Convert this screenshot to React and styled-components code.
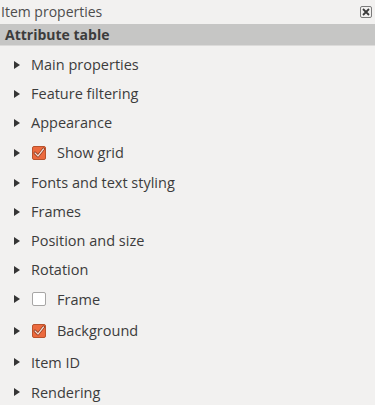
import React from "react";
import styled, { createGlobalStyle } from "styled-components";

const Global = createGlobalStyle`
  html, body { margin: 0; padding: 0; background: #f2f1f0; }
  body { font-family: "Open Sans", "Noto Sans", sans-serif; }
  * { box-sizing: border-box; }
`;

const Panel = styled.div`
  width: 375px;
  height: 405px;
  overflow: hidden;
  background: #f2f1f0;
  display: flex;
  flex-direction: column;
`;

const TitleBar = styled.div`
  height: 24px;
  flex-shrink: 0;
  display: flex;
  align-items: center;
  justify-content: space-between;
  padding: 0 2px 0 1px;
`;

const Title = styled.span`
  font-size: 14px;
  color: #4d4d4d;
  line-height: 1;
  margin-top: -1px;
`;

const CloseBox = styled.div`
  width: 12px;
  height: 12px;
  border: 1px solid #7a7a7a;
  border-radius: 2px;
  display: flex;
  align-items: center;
  justify-content: center;
  margin-right: 1px;
  margin-top: -1px;
`;

const SectionBar = styled.div`
  height: 22px;
  flex-shrink: 0;
  background: #c6c6c5;
  border-bottom: 1px solid #dcdbda;
  display: flex;
  align-items: center;
  padding-left: 5px;
`;

const SectionTitle = styled.span`
  font-size: 14px;
  font-weight: 700;
  color: #3c3c3c;
`;

const List = styled.div`
  display: flex;
  flex-direction: column;
  padding-top: 4px;
`;

const Row = styled.div`
  height: ${(p) => p.$h}px;
  flex-shrink: 0;
  display: flex;
  align-items: center;
  padding-left: 14px;
`;

const Arrow = styled.span`
  width: 0;
  height: 0;
  border-top: 4.5px solid transparent;
  border-bottom: 4.5px solid transparent;
  border-left: 6px solid #353535;
  margin-right: 11px;
`;

const Label = styled.span`
  font-size: 14.5px;
  color: #3c3c3c;
  white-space: nowrap;
`;

const Box = styled.span`
  width: 14px;
  height: 14px;
  margin-left: 1px;
  margin-right: 11px;
  border-radius: 2px;
  border: 1px solid ${(p) => (p.$on ? "#b9522c" : "#a7a6a5")};
  background: ${(p) => (p.$on ? "#ec6a3e" : "#ffffff")};
  display: flex;
  align-items: center;
  justify-content: center;
`;

const Check = () => (
  <svg width="12" height="12" viewBox="0 0 12 12">
    <path d="M2 6 L5 9 L10.5 2" fill="none" stroke="#7a2a12" strokeWidth="2.6" strokeLinecap="round" strokeLinejoin="round" />
    <path d="M2 6 L5 9 L10.5 2" fill="none" stroke="#f6d9cc" strokeWidth="1.3" strokeLinecap="round" strokeLinejoin="round" />
  </svg>
);

const rows = [
  { label: "Main properties", h: 29 },
  { label: "Feature filtering", h: 29 },
  { label: "Appearance", h: 29 },
  { label: "Show grid", h: 31, check: true },
  { label: "Fonts and text styling", h: 29 },
  { label: "Frames", h: 29 },
  { label: "Position and size", h: 29 },
  { label: "Rotation", h: 29 },
  { label: "Frame", h: 30, check: false },
  { label: "Background", h: 33, check: true },
  { label: "Item ID", h: 30 },
  { label: "Rendering", h: 30 },
];

export default function App() {
  return (
    <Panel>
      <Global />
      <TitleBar>
        <Title>Item properties</Title>
        <CloseBox>
          <svg width="8" height="8" viewBox="0 0 8 8">
            <path d="M1 1 L7 7 M7 1 L1 7" stroke="#3a3a3a" strokeWidth="1.8" />
          </svg>
        </CloseBox>
      </TitleBar>
      <SectionBar>
        <SectionTitle>Attribute table</SectionTitle>
      </SectionBar>
      <List>
        {rows.map((r) => (
          <Row key={r.label} $h={r.h}>
            <Arrow />
            {r.check !== undefined && (
              <Box $on={r.check}>{r.check && <Check />}</Box>
            )}
            <Label>{r.label}</Label>
          </Row>
        ))}
      </List>
    </Panel>
  );
}
